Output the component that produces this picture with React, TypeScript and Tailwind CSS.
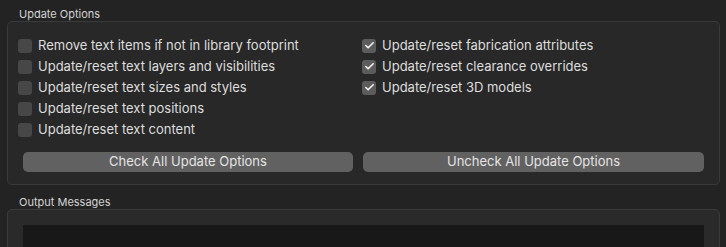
import { Check } from 'lucide-react'

const leftOptions = [
  { label: 'Remove text items if not in library footprint', checked: false },
  { label: 'Update/reset text layers and visibilities', checked: false },
  { label: 'Update/reset text sizes and styles', checked: false },
  { label: 'Update/reset text positions', checked: false },
  { label: 'Update/reset text content', checked: false },
]

const rightOptions = [
  { label: 'Update/reset fabrication attributes', checked: true },
  { label: 'Update/reset clearance overrides', checked: true },
  { label: 'Update/reset 3D models', checked: true },
]

function Option({ label, checked }: { label: string; checked: boolean }) {
  return (
    <div className="flex items-center h-[21px]">
      <span
        className={
          'w-[14px] h-[14px] rounded-[3px] flex items-center justify-center flex-shrink-0 ' +
          (checked ? 'bg-[#5c5c5c]' : 'bg-[#474747]')
        }
      >
        {checked && <Check size={11} strokeWidth={3.5} className="text-[#f4f4f4]" />}
      </span>
      <span className="ml-[6px] text-[13px] text-[#dedede] whitespace-nowrap">{label}</span>
    </div>
  )
}

export default function App() {
  return (
    <div className="w-[726px] h-[247px] overflow-hidden bg-[#232323] px-[7px] font-['Inter','Noto_Sans',sans-serif] antialiased">
      <div className="pl-[12px] pt-[7px] h-[21px] text-[11px] leading-[14px] text-[#d4d4d4]">Update Options</div>

      <div className="h-[164px] w-[713px] rounded-[5px] border border-[#3a3a3a] bg-[#282828]">
        <div className="grid grid-cols-[344px_341px] pl-[10px] pt-[13px]">
          <div className="flex flex-col">
            {leftOptions.map((o) => (
              <Option key={o.label} {...o} />
            ))}
          </div>
          <div className="flex flex-col">
            {rightOptions.map((o) => (
              <Option key={o.label} {...o} />
            ))}
          </div>
        </div>

        <div className="grid grid-cols-[330px_341px] gap-[10px] pl-[15px] mt-[12px]">
          <button className="h-[20px] rounded-[5px] bg-[#616161] text-[13px] text-[#e4e4e4]">
            Check All Update Options
          </button>
          <button className="h-[20px] rounded-[5px] bg-[#616161] text-[13px] text-[#e4e4e4]">
            Uncheck All Update Options
          </button>
        </div>
      </div>

      <div className="pl-[12px] pt-[10px] h-[24px] text-[11px] leading-[14px] text-[#d4d4d4]">Output Messages</div>

      <div className="h-[60px] w-[713px] rounded-[5px] border border-[#3a3a3a] bg-[#2a2a2a] px-[15px] pt-[15px]">
        <div className="h-full bg-[#181818]" />
      </div>
    </div>
  )
}
